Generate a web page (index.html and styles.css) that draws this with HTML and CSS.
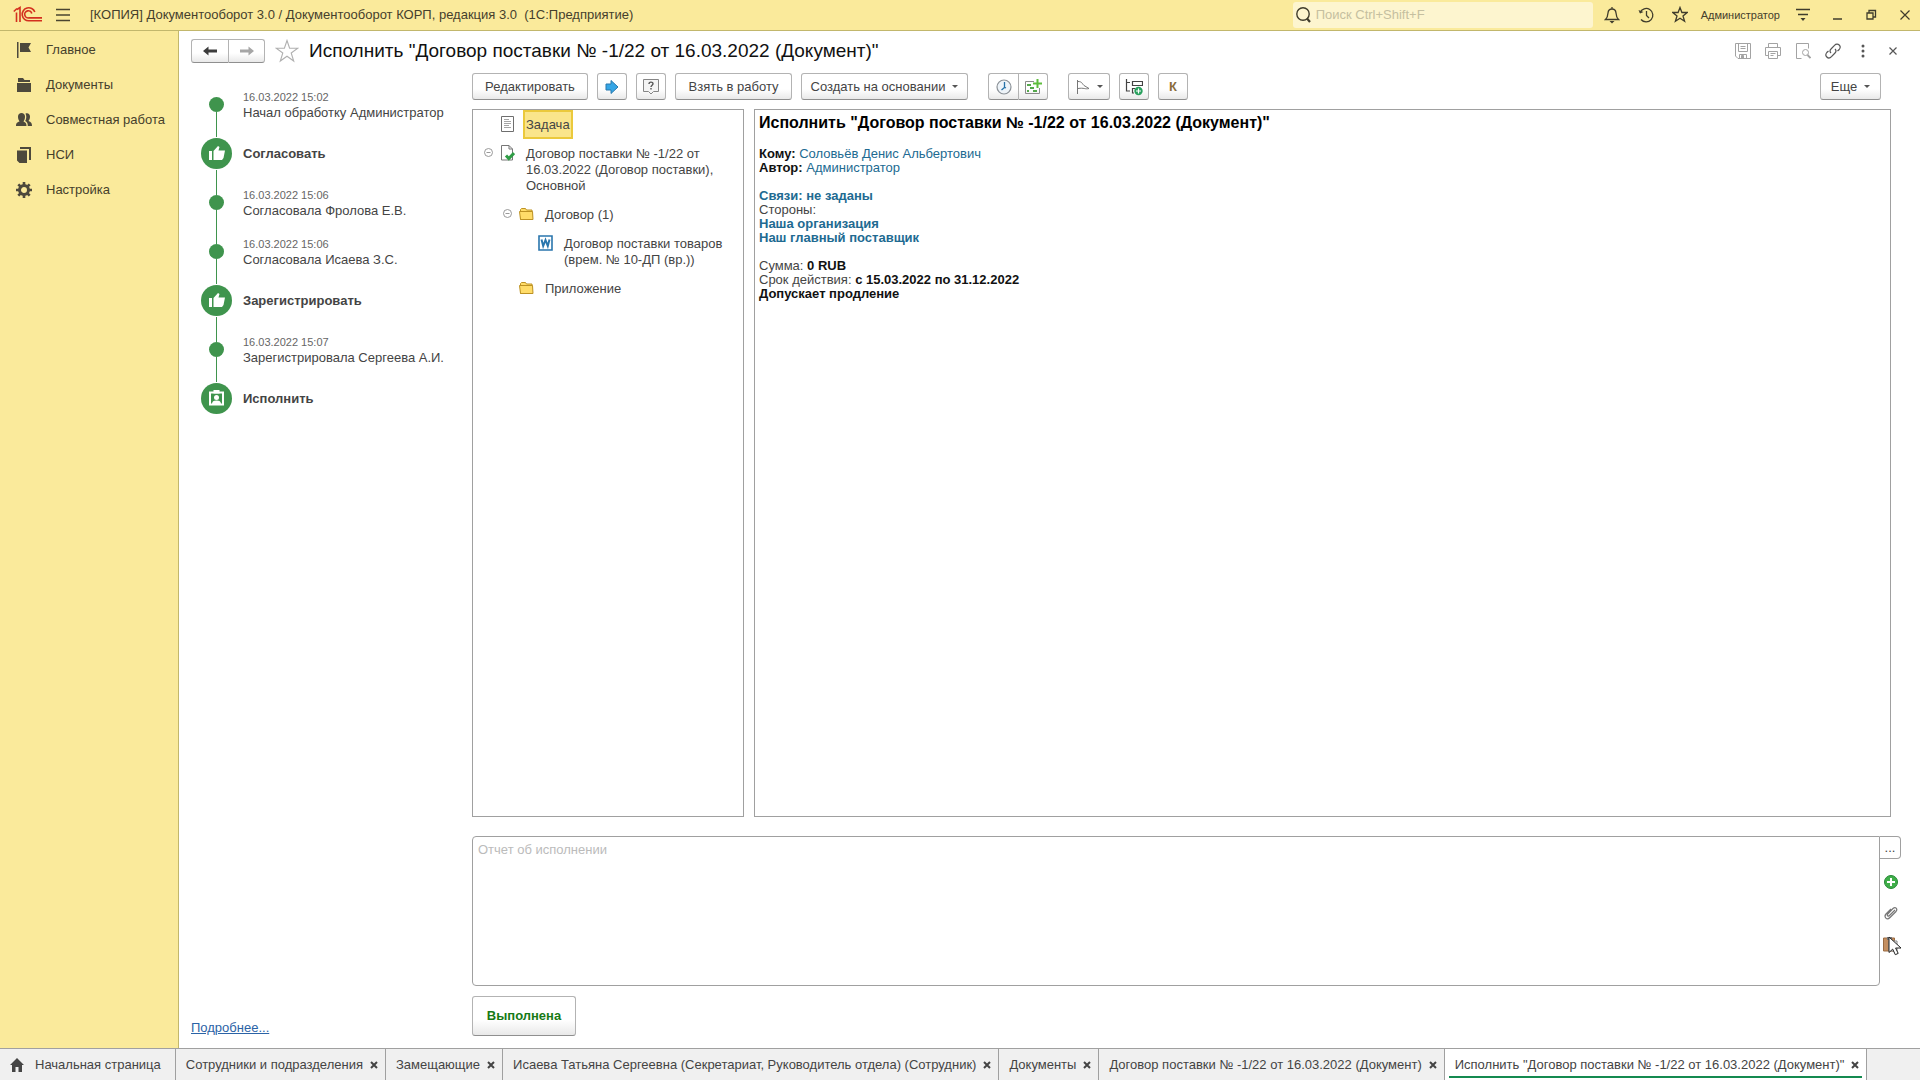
FILE: index.html
```html
<!DOCTYPE html>
<html lang="ru">
<head>
<meta charset="utf-8">
<title>Документооборот КОРП</title>
<link rel="stylesheet" href="styles.css">
</head>
<body>
<header class="topbar">
  <svg class="logo" width="30" height="18" viewBox="0 0 30 18" fill="none" stroke="#d3301f" stroke-width="1.600"><path d="M.8 5.500L4 2.500M3.500 6.500V16M7 16V1.500L4 3.500"/><path d="M21.800 6A6.500 6.500 0 1 0 16 14.800H29"/><path d="M18.800 7.500A3.600 3.600 0 1 0 16 11.900H29"/></svg>
  <button class="plain" aria-label="Меню"><svg width="16" height="14" viewBox="0 0 16 14" stroke="#4a4530" stroke-width="1.400"><path d="M1 1.500h14M1 7h14M1 12.500h14"/></svg></button>
  <span class="app-title">[КОПИЯ] Документооборот 3.0 / Документооборот КОРП, редакция 3.0&nbsp; (1С:Предприятие)</span>
  <label class="search">
    <svg width="17" height="18" viewBox="0 0 17 18" fill="none" stroke="#3f3c2c" stroke-width="1.400"><circle cx="8" cy="8" r="6.200"/><path d="M12 12.500l3 3.500" stroke-width="2.200"/></svg>
    <input type="search" placeholder="Поиск Ctrl+Shift+F" aria-label="Поиск">
  </label>
  <div class="top-actions">
    <button class="plain" aria-label="Уведомления"><svg width="16" height="18" viewBox="0 0 16 18" fill="none" stroke="#3f3c2c" stroke-width="1.300"><path d="M1.500 13.500c2-2 2.300-3.500 2.500-6.500.2-2.500 1.500-4 4-4s3.800 1.500 4 4c.2 3 .5 4.500 2.500 6.500zM8 3V1"/><path d="M5.500 15h5L8 17.500z" fill="#3f3c2c" stroke="none"/></svg></button>
    <button class="plain" aria-label="История"><svg width="16" height="18" viewBox="0 0 16 18" fill="none" stroke="#3f3c2c" stroke-width="1.300"><path d="M2 6.500A6.700 6.700 0 1 1 3 13.500M8.500 5v4.500l2.500 2.500"/><path d="M.5 4l1.500 3.500L5.500 6z" fill="#3f3c2c" stroke="none"/></svg></button>
    <button class="plain" aria-label="Избранное"><svg width="16" height="18" viewBox="0 0 16 18" fill="none" stroke="#3f3c2c" stroke-width="1.300"><path d="M8 1.500l1.900 5h5.300l-4.200 3.400 1.600 5.400L8 12.200l-4.600 3.100L5 9.900.8 6.500h5.300z"/></svg></button>
  </div>
  <a class="user" href="#">Администратор</a>
  <div class="window-actions">
    <button class="plain" aria-label="Настройки"><svg width="16" height="14" viewBox="0 0 16 14" stroke="#3f3c2c" stroke-width="1.300"><path d="M1 1.500h14M3 6.500h10"/><path d="M5.500 10h5L8 13z" fill="#3f3c2c" stroke="none"/></svg></button>
    <button class="plain" aria-label="Свернуть"><svg width="16" height="14" viewBox="0 0 16 14" stroke="#3f3c2c" stroke-width="1.500"><path d="M4 11h9"/></svg></button>
    <button class="plain" aria-label="Восстановить"><svg width="16" height="14" viewBox="0 0 16 14" fill="none" stroke="#3f3c2c" stroke-width="1.300"><path d="M4 5h6v6H4zM6 5V2.500h6.500V9H10"/></svg></button>
    <button class="plain" aria-label="Закрыть"><svg width="16" height="14" viewBox="0 0 16 14" stroke="#3f3c2c" stroke-width="1.200"><path d="M3.500 2.500l9 9M12.500 2.500l-9 9"/></svg></button>
  </div>
</header>

<div class="middle">
  <nav class="sidebar">
    <a href="#"><svg width="16" height="16" viewBox="0 0 16 16" fill="#4d493c"><path d="M1 0h1.500v16H1zM4 1h11l-2.500 4.500L15 10H4z"/></svg>Главное</a>
    <a href="#"><svg width="16" height="16" viewBox="0 0 16 16" fill="#4d493c"><path d="M2 1h5l1.500 2H14v2H2zM1 6h14v9H1z"/></svg>Документы</a>
    <a href="#"><svg width="16" height="16" viewBox="0 0 16 16" fill="#4d493c"><path d="M0 14c0-3 1-3.500 3.500-4.500C2.500 8 2 6.500 2 4.500 2 2.500 3.500 1 5.500 1S9 2.500 9 4.500c0 2-.5 3.500-1.500 5C9.500 10.500 10.500 11 10.500 14z"/><path d="M9.500 1.500C12 .500 14 2 14 4.500c0 2-.5 3-1.500 4.500 2.500 1 3.500 2 3.500 5h-4.200c0-3-.8-4-2.600-5 1.300-2.500 1.500-5 .3-7.500z"/></svg>Совместная работа</a>
    <a href="#"><svg width="16" height="16" viewBox="0 0 16 16" fill="#4d493c"><path d="M1 3.500h10V16H3.500L1 13.500zM4 0h11v13h-2V2H4z"/></svg>НСИ</a>
    <a href="#"><svg width="16" height="16" viewBox="0 0 16 16" fill="none" stroke="#4d493c"><circle cx="8" cy="8" r="4.500" stroke-width="3"/><path d="M8 0v3M8 13v3M0 8h3M13 8h3M2.300 2.300l2.200 2.200M11.500 11.500l2.200 2.200M13.700 2.300l-2.200 2.200M4.500 11.500l-2.200 2.200" stroke-width="2.600"/></svg>Настройка</a>
  </nav>

  <main class="workspace">
    <div class="title-row">
      <div class="group nav-buttons">
        <button class="btn" aria-label="Назад"><svg width="14" height="10" viewBox="0 0 14 10" fill="#3c3c3c"><path d="M0 5l5.500-4.500v3H14v3H5.500v3z"/></svg></button>
        <button class="btn" aria-label="Вперед" disabled><svg width="14" height="10" viewBox="0 0 14 10" fill="#a6a6a6"><path d="M14 5L8.500.5v3H0v3h8.500v3z"/></svg></button>
      </div>
      <button class="plain" aria-label="В избранное"><svg width="24" height="24" viewBox="0 0 24 24" fill="none" stroke="#b0b0b0" stroke-width="1.100"><path d="M12 1.500l2.600 7.700h8.200l-6.600 4.800 2.500 8L12 17.200 5.300 22l2.500-8L1.200 9.200h8.200z"/></svg></button>
      <h1>Исполнить "Договор поставки № -1/22 от 16.03.2022 (Документ)"</h1>
      <div class="form-actions">
        <button class="plain" aria-label="Сохранить"><svg width="16" height="16" viewBox="0 0 16 16" fill="none" stroke="#a3a3a3"><path d="M.5.500h15v15H3l-2.500-2.500zM3.500.500v8h9v-8M5.500 3.500h5M5.500 5.500h5M4.500 15.500v-4h7v4"/><path d="M6.500 12.500h2v3h-2z" fill="#a3a3a3"/></svg></button>
        <button class="plain" aria-label="Печать"><svg width="16" height="16" viewBox="0 0 16 16" fill="none" stroke="#a3a3a3"><path d="M3.500 4.500v-4h9v4M3.500 12.500h-3v-8h15v8h-3M3.500 8.500h9v7h-9zM5.500 10.500h5M5.500 12.500h3"/></svg></button>
        <button class="plain" aria-label="Просмотр"><svg width="16" height="16" viewBox="0 0 16 16" fill="none" stroke="#a3a3a3"><path d="M6.500 15.500h-5v-15h12v5"/><circle cx="10.500" cy="9.500" r="3"/><path d="M12.500 12l3 3" stroke-width="1.800"/></svg></button>
        <button class="plain" aria-label="Ссылка"><svg width="16" height="16" viewBox="0 0 16 16" fill="none" stroke="#565656" stroke-width="1.200"><path d="M6 10c-1.500-1.500-1-3 0-4l3.500-3.700C11 .8 13 .8 14.200 2s1.200 3 0 4.500L12.500 8"/><path d="M10 6c1.500 1.500 1 3 0 4l-3.500 3.700c-1.500 1.500-3.500 1.500-4.700.3s-1.200-3 0-4.500L3.500 8"/></svg></button>
        <button class="plain" aria-label="Действия"><svg width="16" height="16" viewBox="0 0 16 16" fill="#565656"><circle cx="8" cy="3" r="1.500"/><circle cx="8" cy="8" r="1.500"/><circle cx="8" cy="13" r="1.500"/></svg></button>
        <button class="plain" aria-label="Закрыть форму"><svg width="16" height="16" viewBox="0 0 16 16" stroke="#565656" stroke-width="1.200"><path d="M4.500 4.500l7 7M11.500 4.500l-7 7"/></svg></button>
      </div>
    </div>

    <div class="content">
      <section class="history">
        <ol class="timeline">
          <li class="event first"><span class="mark"><i class="dot"></i></span><p><time>16.03.2022 15:02</time>Начал обработку Администратор</p></li>
          <li class="stage"><span class="mark"><svg width="31" height="31" viewBox="0 0 31 31"><circle cx="15.500" cy="15.500" r="15.500" fill="#3f944d"/><path d="M8 13h3v9H8zM12.500 13L17 8l1.500 1-1 3.500H24L22.500 20l-1.500 2h-8.500z" fill="#fff"/></svg></span><b>Согласовать</b></li>
          <li class="event"><span class="mark"><i class="dot"></i></span><p><time>16.03.2022 15:06</time>Согласовала Фролова Е.В.</p></li>
          <li class="event"><span class="mark"><i class="dot"></i></span><p><time>16.03.2022 15:06</time>Согласовала Исаева З.С.</p></li>
          <li class="stage"><span class="mark"><svg width="31" height="31" viewBox="0 0 31 31"><circle cx="15.500" cy="15.500" r="15.500" fill="#3f944d"/><path d="M8 13h3v9H8zM12.500 13L17 8l1.500 1-1 3.500H24L22.500 20l-1.500 2h-8.500z" fill="#fff"/></svg></span><b>Зарегистрировать</b></li>
          <li class="event"><span class="mark"><i class="dot"></i></span><p><time>16.03.2022 15:07</time>Зарегистрировала Сергеева А.И.</p></li>
          <li class="stage last"><span class="mark"><svg width="31" height="31" viewBox="0 0 31 31"><circle cx="15.500" cy="15.500" r="15.500" fill="#3f944d"/><path d="M9 9.500h13v12H9z" fill="none" stroke="#fff" stroke-width="2"/><path d="M12.500 7h6v3.500h-6zM11 21c0-2.500 1.500-3.500 4.500-3.500S20 18.500 20 21z" fill="#fff"/><circle cx="15.500" cy="14.500" r="2.500" fill="#fff"/></svg></span><b>Исполнить</b></li>
        </ol>
        <a class="more" href="#">Подробнее...</a>
      </section>

      <section class="task">
        <div class="toolbar">
          <button class="btn w-edit">Редактировать</button>
          <button class="btn icon" aria-label="Перенаправить"><svg width="14" height="16" viewBox="0 0 14 16"><path d="M1 5h5V1.500L13 8l-7 6.500V11H1z" fill="#35a6e6" stroke="#2878ad"/></svg></button>
          <button class="btn icon" aria-label="Вопрос"><svg width="16" height="16" viewBox="0 0 16 16" fill="none" stroke="#858585"><path d="M.5.500h15v12h-5L8 15l-2.500-2.500h-5z" fill="#f4f4f4"/><path d="M6 5c0-2.500 4-2.500 4-.2C10 6.200 8 6.200 8 8M8 9v1.500" stroke="#555" stroke-width="1.400"/></svg></button>
          <button class="btn w-take">Взять в работу</button>
          <button class="btn w-create">Создать на основании<i class="caret"></i></button>
          <div class="group after-text">
            <button class="btn icon" aria-label="Срок"><svg width="16" height="16" viewBox="0 0 16 16" fill="none"><circle cx="8" cy="8" r="7" fill="#eef4f9" stroke="#8b9197" stroke-width="1.200"/><path d="M8.500 3v5.500L5.500 11M8 8l2 1" stroke="#2471a8" stroke-width="1.300"/></svg></button>
            <button class="btn icon" aria-label="Добавить в календарь"><svg width="18" height="16" viewBox="0 0 18 16"><path d="M10 2.500H1.500v12h14V9" fill="none" stroke="#8b8b8b"/><path d="M3 5h4v2H3zM6 8h4v2H6zM9 11h4v2H9zM3 11h2v2H3z" fill="#55a84c"/><path d="M12.500 0h2v3.500H18v2h-3.500V9h-2V5.500H9v-2h3.500z" fill="#5ebd3d"/></svg></button>
          </div>
          <button class="btn w-flag" aria-label="Флаг"><svg width="14" height="14" viewBox="0 0 14 14" fill="none" stroke="#777"><path d="M1.500 0v14M2 1.500c4 0 4 2 6 4l5 3c-4 1-5-1-11 0"/></svg><i class="caret"></i></button>
          <button class="btn icon" aria-label="Добавить подзадачу"><svg width="18" height="18" viewBox="0 0 18 18" fill="none" stroke="#444" stroke-width="1.200"><path d="M1.500 1v12H5M1.500 4.500H5M7.500 3.500h10v4h-10zM10 10.500H7.500V15H9"/><circle cx="13.500" cy="13" r="4.200" fill="#28a05d" stroke="none"/><path d="M13.500 10.500v5M11 13h5" stroke="#fff"/></svg></button>
          <button class="btn icon letter">К</button>
          <button class="btn w-more">Еще<i class="caret"></i></button>
        </div>

        <div class="panels">
          <ul class="tree">
            <li class="level-1"><span class="toggle"></span><svg width="15" height="17" viewBox="0 0 15 17" fill="#fff" stroke="#6e6e6e"><path d="M1.500.500h12v15h-12z"/><path d="M4 3.500h5M4 5.500h7M4 7.500h7M4 9.500h5M4 11.500h7" stroke="#a5a5a5"/></svg><span class="label selected">Задача</span></li>
            <li class="level-1"><button class="plain toggle" aria-label="Свернуть ветвь"><svg width="9" height="9" viewBox="0 0 9 9" fill="none" stroke="#999"><circle cx="4.500" cy="4.500" r="4"/><path d="M2.500 4.500h4"/></svg></button><svg width="15" height="17" viewBox="0 0 15 17"><path d="M1.500.500H9l3.500 3.500v11h-11z" fill="#fff" stroke="#777"/><path d="M9 .500V4h3.500" fill="none" stroke="#777"/><path d="M6 10.500l2.800 3L14 8" fill="none" stroke="#2f9d46" stroke-width="3"/></svg><span class="label">Договор поставки № -1/22 от 16.03.2022 (Договор поставки), Основной</span></li>
            <li class="level-2"><button class="plain toggle" aria-label="Свернуть ветвь"><svg width="9" height="9" viewBox="0 0 9 9" fill="none" stroke="#999"><circle cx="4.500" cy="4.500" r="4"/><path d="M2.500 4.500h4"/></svg></button><svg width="15" height="17" viewBox="0 0 15 17"><path d="M1.500 13.500v-10l1-1h4l1 1.500h5.500v9.500z" fill="#ffdc69" stroke="#bd9224"/><path d="M.5 5.500h13l.5 8H1.500z" fill="#ffdc69" stroke="#bd9224"/></svg><span class="label">Договор (1)</span></li>
            <li class="level-3"><span class="toggle"></span><svg width="15" height="17" viewBox="0 0 15 17"><path d="M1 1h13v14H1z" fill="#fff" stroke="#2a76ad" stroke-width="1.600"/><path d="M3.500 4.500l1.700 6.500 2.300-6 2.300 6 1.700-6.500" fill="none" stroke="#2a76ad" stroke-width="2"/></svg><span class="label">Договор поставки товаров (врем. № 10-ДП (вр.))</span></li>
            <li class="level-2"><span class="toggle"></span><svg width="15" height="17" viewBox="0 0 15 17"><path d="M1.500 13.500v-10l1-1h4l1 1.500h5.500v9.500z" fill="#ffdc69" stroke="#bd9224"/><path d="M.5 5.500h13l.5 8H1.500z" fill="#ffdc69" stroke="#bd9224"/></svg><span class="label">Приложение</span></li>
          </ul>

          <article class="details">
            <h2>Исполнить "Договор поставки № -1/22 от 16.03.2022 (Документ)"</h2>
            <p><b>Кому:</b> <a href="#">Соловьёв Денис Альбертович</a><br><b>Автор:</b> <a href="#">Администратор</a></p>
            <p><a href="#"><b>Связи: не заданы</b></a><br>Стороны:<br><a href="#"><b>Наша организация</b></a><br><a href="#"><b>Наш главный поставщик</b></a></p>
            <p>Сумма: <b>0 RUB</b><br>Срок действия: <b>с 15.03.2022 по 31.12.2022</b><br><b>Допускает продление</b></p>
          </article>
        </div>

        <div class="report">
          <textarea placeholder="Отчет об исполнении" aria-label="Отчет об исполнении"></textarea>
          <div class="report-tools">
            <button class="choose" aria-label="Выбрать">...</button>
            <button class="plain" aria-label="Добавить"><svg width="16" height="16" viewBox="0 0 16 16"><circle cx="8" cy="8" r="6.500" fill="#3fae49" stroke="#258a35"/><path d="M8 4v8M4 8h8" stroke="#fff" stroke-width="2"/></svg></button>
            <button class="plain" aria-label="Прикрепить файл"><svg width="16" height="16" viewBox="0 0 16 16" fill="none" stroke="#777" stroke-width="1.200"><path d="M12 5l-5.500 5.500c-1.500 1.500-3-.2-1.800-1.500L10 3.500c2.500-2.300 5 .5 3 3L7 12.500c-3.200 3.200-6.500-.5-4-3.500l5-5"/></svg></button>
            <div class="paste">
              <button class="plain" aria-label="Вставить"><svg width="16" height="16" viewBox="0 0 16 16"><path d="M.5 2h11v13H.5z" fill="#c58f60" stroke="#9a6b42"/><path d="M4 1h5v3H4z" fill="#777"/><path d="M6 5h8v10H6z" fill="#f4f4f4" stroke="#888"/></svg></button>
              <svg class="pointer" width="14" height="20" viewBox="0 0 14 20"><path d="M1 1v15.500l3.700-3.400 2.600 5.600 2.900-1.300-2.600-5.400H13z" fill="#fff" stroke="#222"/></svg>
            </div>
          </div>
        </div>
        <button class="btn done">Выполнена</button>
      </section>
    </div>
  </main>
</div>

<footer class="tabs">
  <div class="tab home"><a href="#"><svg width="14" height="14" viewBox="0 0 14 14" fill="#454545"><path d="M7 0l7 7h-2v7H8.500V9h-3v5H2V7H0z"/></svg>Начальная страница</a></div>
  <div class="tab"><a href="#">Сотрудники и подразделения</a><button class="plain" aria-label="Закрыть вкладку"><svg width="8" height="8" viewBox="0 0 8 8" stroke="#444" stroke-width="2"><path d="M1 1l6 6M7 1L1 7"/></svg></button></div>
  <div class="tab"><a href="#">Замещающие</a><button class="plain" aria-label="Закрыть вкладку"><svg width="8" height="8" viewBox="0 0 8 8" stroke="#444" stroke-width="2"><path d="M1 1l6 6M7 1L1 7"/></svg></button></div>
  <div class="tab"><a href="#">Исаева Татьяна Сергеевна (Секретариат, Руководитель отдела) (Сотрудник)</a><button class="plain" aria-label="Закрыть вкладку"><svg width="8" height="8" viewBox="0 0 8 8" stroke="#444" stroke-width="2"><path d="M1 1l6 6M7 1L1 7"/></svg></button></div>
  <div class="tab"><a href="#">Документы</a><button class="plain" aria-label="Закрыть вкладку"><svg width="8" height="8" viewBox="0 0 8 8" stroke="#444" stroke-width="2"><path d="M1 1l6 6M7 1L1 7"/></svg></button></div>
  <div class="tab"><a href="#">Договор поставки № -1/22 от 16.03.2022 (Документ)</a><button class="plain" aria-label="Закрыть вкладку"><svg width="8" height="8" viewBox="0 0 8 8" stroke="#444" stroke-width="2"><path d="M1 1l6 6M7 1L1 7"/></svg></button></div>
  <div class="tab active"><a href="#">Исполнить "Договор поставки № -1/22 от 16.03.2022 (Документ)"</a><button class="plain" aria-label="Закрыть вкладку"><svg width="8" height="8" viewBox="0 0 8 8" stroke="#444" stroke-width="2"><path d="M1 1l6 6M7 1L1 7"/></svg></button></div>
</footer>
</body>
</html>
```
FILE: styles.css
```css
* { box-sizing: border-box; }

body {
  margin: 0;
  min-height: 100vh;
  display: flex;
  flex-direction: column;
  background: #fff;
  color: #444;
  font: 13px/16px "Liberation Sans", Arial, sans-serif;
}

a { color: inherit; text-decoration: none; }
svg { display: block; flex: none; }
button, input, textarea { font: inherit; color: inherit; }
h1, h2, p, ol, ul { margin: 0; padding: 0; }
ol, ul { list-style: none; }

.plain {
  display: block;
  padding: 0;
  border: 0;
  background: none;
}

/* Top bar */
.topbar {
  display: flex;
  align-items: center;
  height: 31px;
  padding: 0 7px 0 13px;
  background: #faea9b;
  border-bottom: 1px solid #c2b76c;
  color: #45402c;
}
.topbar .logo { margin-right: 12px; }
.app-title { margin-left: 19px; white-space: nowrap; }
.search {
  display: flex;
  align-items: center;
  gap: 4px;
  width: 300px;
  height: 26px;
  margin-left: auto;
  padding-left: 2px;
  background: #fdf5cf;
  border-radius: 3px;
}
.search input {
  flex: 1;
  min-width: 0;
  padding: 0;
  border: 0;
  outline: 0;
  background: none;
}
.search input::placeholder { color: #c5bfa0; opacity: 1; }
.top-actions { display: flex; gap: 18px; margin: 0 13px 0 11px; }
.user { font-size: 11px; }
.window-actions { display: flex; gap: 18px; margin-left: 15px; }

/* Section navigation */
.middle { flex: 1; display: flex; }
.sidebar {
  flex: none;
  width: 179px;
  padding-top: 1px;
  background: #faea9b;
  border-right: 1px solid #c2b76c;
}
.sidebar a {
  display: flex;
  align-items: center;
  gap: 14px;
  height: 35px;
  padding-left: 16px;
  color: #45402c;
}

/* Form */
.workspace {
  flex: 1;
  min-width: 0;
  display: flex;
  flex-direction: column;
  padding: 8px 19px 12px 12px;
}
.title-row { display: flex; align-items: center; height: 24px; }
.title-row h1 {
  margin-left: 10px;
  color: #111;
  font-size: 19px;
  font-weight: 400;
  line-height: 24px;
}
.group { display: flex; }
.nav-buttons { margin-right: 10px; }
.nav-buttons .btn { width: 37px; height: 24px; }
.form-actions { display: flex; gap: 14px; margin-left: auto; }

.btn {
  display: flex;
  align-items: center;
  justify-content: center;
  height: 27px;
  padding: 0;
  border: 1px solid #b3b3b3;
  border-bottom-color: #8f8f8f;
  border-radius: 3px;
  background: linear-gradient(#fff 60%, #e9e9e9);
}
.icon { width: 30px; }
.group .btn:first-child { border-radius: 3px 0 0 3px; border-right: 0; }
.group .btn:last-child { border-radius: 0 3px 3px 0; }
.caret {
  border: 3px solid transparent;
  border-top-color: #555;
  border-bottom: 0;
  margin-left: 7px;
}

.content { flex: 1; display: flex; }

/* Processing history */
.history {
  flex: none;
  width: 281px;
  display: flex;
  flex-direction: column;
  justify-content: space-between;
  padding-top: 17px;
}
.timeline li { display: flex; align-items: center; height: 49px; }
.mark {
  width: 31px;
  height: 49px;
  margin: 0 11px 0 10px;
  display: flex;
  flex-direction: column;
  align-items: center;
}
.mark::before, .mark::after {
  content: "";
  flex: 1;
  width: 1px;
  background: #3f944d;
}
.stage .mark { gap: 1px; }
.first .mark::before, .last .mark::after { background: none; }
.dot { width: 15px; height: 15px; border-radius: 50%; background: #3f944d; }
.timeline time { display: block; font-size: 11px; color: #666; }
.more { align-self: flex-start; color: #2b63a6; text-decoration: underline; }

/* Task */
.task { flex: 1; min-width: 0; display: flex; flex-direction: column; }
.toolbar {
  display: flex;
  gap: 9px;
  margin: 10px 20px 9px 0;
}
.w-edit { width: 116px; }
.w-take { width: 117px; }
.w-create { width: 167px; }
.w-flag { width: 42px; margin-left: 11px; }
.w-more { width: 61px; margin-left: auto; }
.after-text { margin-left: 11px; }
.letter { color: #8a6d3b; font-weight: 700; }

.panels { flex: 1; display: flex; gap: 10px; padding-right: 10px; }
.tree { flex: none; width: 272px; border: 1px solid #a0a0a0; }
.tree li { display: flex; align-items: flex-start; padding-right: 12px; }
.tree svg { margin-top: 6px; }
.level-1 { padding-left: 11px; }
.level-2 { padding-left: 30px; }
.level-3 { padding-left: 49px; }
.toggle { flex: none; width: 9px; margin: 4px 7px 0 0; }
.tree .toggle svg { margin: 0; margin-top: 5px; }
.label {
  margin-left: 8px;
  padding: 5px 1px 4px;
  border: 2px solid transparent;
}
.selected { background: #fae58b; border-color: #ebc93c; }

.details {
  flex: 1;
  padding: 4px;
  border: 1px solid #a0a0a0;
  line-height: 14px;
}
.details h2 { color: #000; font-size: 16px; line-height: 18px; }
.details p { margin-top: 14px; }
.details b { color: #111; }
.details a, .details a b { color: #216a91; }
.details h2 + p { margin-top: 15px; }

.report { display: flex; height: 150px; margin-top: 19px; }
.report textarea {
  flex: 1;
  display: block;
  padding: 5px;
  border: 1px solid #a0a0a0;
  border-radius: 4px 0 4px 4px;
  outline: 0;
  resize: none;
}
.report textarea::placeholder { color: #bbb; opacity: 1; }
.report-tools {
  flex: none;
  width: 21px;
  display: flex;
  flex-direction: column;
  align-items: center;
  gap: 15px;
}
.choose {
  width: 21px;
  height: 23px;
  padding: 0;
  border: 1px solid #a0a0a0;
  border-left: 0;
  border-radius: 0 4px 4px 0;
  background: #fff;
}
.paste { position: relative; }
.pointer { position: absolute; left: 5px; top: 0; }

.done {
  align-self: flex-start;
  width: 104px;
  height: 40px;
  margin-top: 10px;
  color: #167a16;
  font-weight: 700;
}

/* Open windows */
.tabs {
  display: flex;
  height: 32px;
  background: #f0f0f0;
  border-top: 1px solid #a0a0a0;
}
.tab {
  display: flex;
  align-items: center;
  gap: 7px;
  padding: 0 7px 0 10px;
  border-right: 1px solid #a0a0a0;
  white-space: nowrap;
}
.tab a { display: flex; align-items: center; gap: 11px; }
.home { padding-right: 14px; }
.active {
  background: linear-gradient(#148a50, #148a50) center bottom 2px / calc(100% - 8px) 2px no-repeat #fff;
}
```
